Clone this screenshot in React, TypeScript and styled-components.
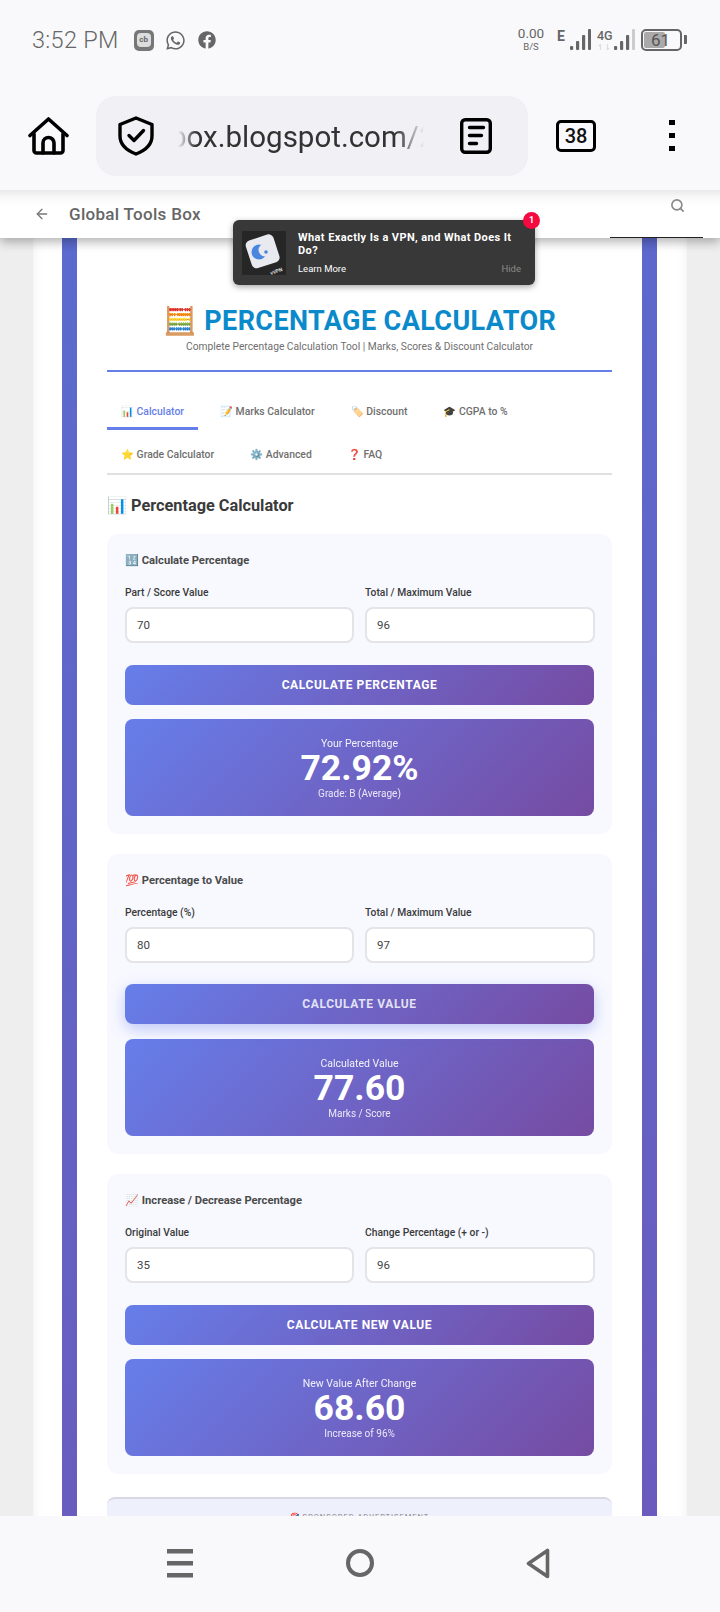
import styled, { createGlobalStyle } from "styled-components";
import { ArrowLeft, Search } from "lucide-react";
import { FaFacebook, FaWhatsapp } from "react-icons/fa";

const GlobalStyle = createGlobalStyle`
  html, body { margin: 0; padding: 0; background: #f9f9fb; }
  body { font-family: Roboto, "Noto Sans", sans-serif; }
  * { box-sizing: border-box; }
`;

const Screen = styled.div`
  width: 720px;
  height: 1612px;
  display: flex;
  flex-direction: column;
  overflow: hidden;
`;

/* phone status bar */
const StatusBar = styled.div`
  height: 96px;
  flex-shrink: 0;
  background: #f9f9fb;
  display: flex;
  justify-content: space-between;
  align-items: flex-start;
  padding: 29px 32px 0 32px;
  color: #666;
`;

const StatusLeft = styled.div`
  display: flex;
  align-items: center;
  height: 22px;
`;

const Clock = styled.span`
  font-size: 23.5px;
  font-weight: 300;
  margin-right: 15px;
  letter-spacing: 0.3px;
`;

const CbIcon = styled.span`
  width: 20px;
  height: 21px;
  border-radius: 5px;
  background: #777;
  display: flex;
  align-items: center;
  justify-content: center;
  margin-right: 11px;
`;

const CbInner = styled.span`
  width: 14px;
  height: 14px;
  border-radius: 4px;
  background: #ddd;
  color: #666;
  font-size: 8px;
  font-weight: 700;
  line-height: 14px;
  text-align: center;
`;

const StatusGlyph = styled.span`
  display: flex;
  margin-right: 12px;
  color: #666;
`;

const StatusRight = styled.div`
  display: flex;
  align-items: flex-start;
  margin-right: 1px;
`;

const Speed = styled.div`
  display: flex;
  flex-direction: column;
  align-items: center;
  width: 28px;
  margin-right: 12px;
  margin-top: -3px;
`;

const SpeedValue = styled.span`
  font-size: 13.5px;
  line-height: 15px;
`;

const SpeedUnit = styled.span`
  font-size: 9.5px;
  line-height: 11px;
`;

const NetLabel = styled.span`
  font-size: 14px;
  font-weight: 700;
  line-height: 14px;
  width: 13px;
`;

const Net4G = styled.div`
  display: flex;
  flex-direction: column;
  align-items: flex-start;
  width: 17px;
  margin-left: 6px;
  font-size: 12.5px;
  font-weight: 500;
  line-height: 14px;
`;

const NetArrows = styled.span`
  font-size: 8px;
  line-height: 8px;
  color: #ccc;
  margin-top: 1px;
`;

const Battery = styled.div`
  position: relative;
  width: 41px;
  height: 22px;
  margin-left: 6px;
  border: 2px solid #666;
  border-radius: 5px;
  padding: 1px;
`;

const BatteryFill = styled.div`
  width: 21px;
  height: 100%;
  background: #aaa;
  border-radius: 2px;
`;

const BatteryText = styled.span`
  position: absolute;
  left: 8px;
  top: 0;
  font-size: 17px;
  line-height: 18px;
  color: #555;
`;

const BatteryTip = styled.div`
  width: 3px;
  height: 9px;
  margin: 6px 0 0 2px;
  background: #666;
  border-radius: 0 1px 1px 0;
`;

/* browser toolbar */
const Toolbar = styled.div`
  height: 94px;
  flex-shrink: 0;
  background: #f9f9fb;
  display: flex;
  align-items: flex-start;
`;

const HomeButton = styled.div`
  width: 96px;
  height: 80px;
  padding-left: 28px;
  display: flex;
  align-items: center;
`;

const Omnibox = styled.div`
  width: 432px;
  height: 80px;
  border-radius: 20px;
  background: #f0f0f5;
  display: flex;
  align-items: center;
  padding-left: 22px;
`;

const UrlClip = styled.div`
  width: 264px;
  margin-left: 16px;
  padding-top: 2px;
  overflow: hidden;
  white-space: nowrap;
  font-size: 29.5px;
  line-height: 40px;
  color: #333;
  -webkit-mask-image: linear-gradient(90deg, transparent 8px, #000 26px, #000 226px, transparent 254px);
  mask-image: linear-gradient(90deg, transparent 8px, #000 26px, #000 226px, transparent 254px);
`;

const DocButton = styled.div`
  margin-left: 26px;
  display: flex;
`;

const TabCount = styled.div`
  width: 40px;
  height: 32px;
  margin: 24px 0 0 28px;
  border: 3px solid #000;
  border-radius: 5px;
  display: flex;
  align-items: center;
  justify-content: center;
  font-size: 20px;
  font-weight: 500;
  color: #111;
`;

const MenuDots = styled.div`
  margin: 24px 0 0 73px;
  display: flex;
  flex-direction: column;
  gap: 8px;
`;

const Dot = styled.span`
  width: 6px;
  height: 5px;
  background: #000;
`;

/* web page area */
const Viewport = styled.div`
  position: relative;
  flex: 1;
  min-height: 0;
  overflow: hidden;
  background: #eeeeee;
  padding: 0 33px;
`;

const SiteBar = styled.div`
  position: absolute;
  top: 0;
  left: 0;
  right: 0;
  height: 48px;
  z-index: 2;
  background: linear-gradient(180deg, #e9e9ea 0, #f9f9f9 8px, #ffffff 16px);
  box-shadow: 0 4px 10px rgba(0, 0, 0, 0.3);
  display: flex;
  align-items: center;
  padding: 0 0 1px 34px;
  color: #777;
`;

const SiteTitle = styled.span`
  margin-left: 19px;
  font-size: 17px;
  font-weight: 500;
  color: #666;
  letter-spacing: 0.3px;
`;

const SiteSearch = styled.span`
  position: absolute;
  right: 35px;
  top: 8px;
  display: flex;
  color: #888;
`;

const SiteBarLine = styled.span`
  position: absolute;
  right: 17px;
  bottom: 0;
  width: 93px;
  height: 1px;
  background: #222;
`;

const AdPopup = styled.div`
  position: absolute;
  z-index: 3;
  left: 233px;
  top: 30px;
  width: 302px;
  height: 65px;
  border-radius: 6px;
  background: #383838;
  box-shadow: 0 2px 6px rgba(0, 0, 0, 0.35);
  display: flex;
  padding: 11px 14px 0 9px;
  color: #fff;
`;

const AdThumb = styled.div`
  position: relative;
  width: 44px;
  height: 44px;
  flex-shrink: 0;
  background: #262626;
  margin-right: 12px;
`;

const AdThumbText = styled.span`
  position: absolute;
  right: 3px;
  bottom: 1px;
  font-size: 5px;
  font-weight: 700;
  color: #ddd;
  transform: rotate(-20deg);
`;

const AdBody = styled.div`
  flex: 1;
  min-width: 0;
`;

const AdTitle = styled.div`
  font-size: 11px;
  font-weight: 700;
  line-height: 13px;
  letter-spacing: 0.4px;
`;

const AdFoot = styled.div`
  display: flex;
  justify-content: space-between;
  font-size: 9.5px;
  line-height: 12px;
  margin-top: 6px;
`;

const AdHide = styled.span`
  color: #8a8a8a;
`;

const AdBadge = styled.span`
  position: absolute;
  right: -5px;
  top: -8px;
  width: 17px;
  height: 17px;
  border-radius: 50%;
  background: #f5093f;
  font-size: 9px;
  font-weight: 700;
  line-height: 17px;
  text-align: center;
`;

const Sheet = styled.div`
  background: #fff;
  padding: 0 30px 0 29px;
  height: 100%;
  box-shadow: inset 10px 0 10px -8px rgba(0, 0, 0, 0.05), inset -10px 0 10px -8px rgba(0, 0, 0, 0.05);
`;

const Frame = styled.div`
  background: linear-gradient(165deg, #5a6bcf 0%, #6a5bbd 100%);
  padding: 0 15px;
  height: 100%;
`;

const Page = styled.div`
  background: #fff;
  height: 100%;
  padding: 115px 30px 0;
`;

const Header = styled.header`
  text-align: center;
  border-bottom: 2px solid #667eea;
  padding-bottom: 17px;
  margin-bottom: 20px;
`;

const Title = styled.h1`
  margin: 0;
  font-size: 27px;
  line-height: 32px;
  font-weight: 700;
  color: #0a8acb;
  letter-spacing: 0.4px;
`;

const Subtitle = styled.p`
  margin: 3px 0 0;
  font-size: 10.25px;
  line-height: 13px;
  color: #6f6f6f;
`;

const Tabs = styled.nav`
  display: flex;
  flex-wrap: wrap;
  gap: 5px 8px;
  border-bottom: 2px solid #e0e0e0;
`;

const Tab = styled.span<{ $active?: boolean }>`
  height: 38px;
  padding: 3px 14px 0;
  display: flex;
  align-items: center;
  font-size: 10.4px;
  font-weight: 500;
  white-space: pre;
  color: ${(p) => (p.$active ? "#667eea" : "#6f6f6f")};
  border-bottom: 3px solid ${(p) => (p.$active ? "#667eea" : "transparent")};
`;

const SectionTitle = styled.h2`
  margin: 21px 0 18px;
  font-size: 16.3px;
  line-height: 20px;
  font-weight: 700;
  color: #3a3a3a;
`;

const Card = styled.section`
  height: 300px;
  margin-bottom: 20px;
  padding: 18px;
  background: #f8f9ff;
  border-radius: 12px;
`;

const CardTitle = styled.h3`
  margin: 1px 0 17px;
  font-size: 11.2px;
  line-height: 16px;
  font-weight: 700;
  color: #4a4a4a;
`;

const Fields = styled.div`
  display: grid;
  grid-template-columns: 229px 230px;
  gap: 11px;
  margin-bottom: 22px;
  margin-top: -1px;
`;

const Field = styled.label`
  display: block;
`;

const FieldLabel = styled.span`
  display: block;
  height: 14px;
  margin-bottom: 8px;
  padding-top: 1px;
  font-size: 10.3px;
  line-height: 14px;
  font-weight: 500;
  color: #3a3a3a;
`;

const ValueInput = styled.input`
  display: block;
  width: 100%;
  height: 36px;
  padding: 0 10px;
  border: 2px solid #e3e3e8;
  border-radius: 8px;
  background: #fff;
  font-family: Roboto, sans-serif;
  font-size: 11.5px;
  color: #444;
  outline: none;
`;

const Gradient = "linear-gradient(135deg, #667eea 0%, #764ba2 100%)";

const CalcButton = styled.button<{ $hover?: boolean }>`
  display: block;
  width: 100%;
  height: 40px;
  margin-bottom: 14px;
  border: none;
  border-radius: 8px;
  background: ${Gradient};
  font-family: Roboto, sans-serif;
  font-size: 12px;
  font-weight: 700;
  letter-spacing: 0.6px;
  color: ${(p) => (p.$hover ? "rgba(255,255,255,0.82)" : "#fff")};
  ${(p) => p.$hover && "transform: translateY(-1px); box-shadow: 0 5px 15px rgba(102, 126, 234, 0.4);"}
`;

const Result = styled.div`
  height: 97px;
  border-radius: 8px;
  background: ${Gradient};
  color: #fff;
  text-align: center;
  padding-top: 18px;
`;

const ResultLabel = styled.div`
  font-size: 10.5px;
  line-height: 14px;
  opacity: 0.9;
`;

const ResultValue = styled.div`
  font-size: 35.5px;
  line-height: 35px;
  font-weight: 700;
`;

const ResultNote = styled.div`
  font-size: 10px;
  line-height: 13px;
  opacity: 0.85;
  margin-top: 1px;
`;

const AdSlot = styled.div`
  margin-top: 23px;
  height: 60px;
  border-top: 2px solid #d8d8e4;
  border-radius: 8px 8px 0 0;
  background: #eef0fc;
  padding-top: 12px;
  text-align: center;
  font-size: 7.5px;
  line-height: 12px;
  letter-spacing: 1px;
  color: #888;
`;

/* phone navigation bar */
const NavBar = styled.div`
  height: 96px;
  flex-shrink: 0;
  background: #f9f9fb;
  display: flex;
  padding: 33px 0 0 90px;
  position: relative;
`;

const NavItem = styled.div`
  width: 180px;
  display: flex;
  justify-content: center;
  color: #666;
`;

const HomeIcon = () => (
  <svg width="41" height="38" viewBox="0 0 41 38" fill="none" stroke="#000" strokeWidth="3.6" strokeLinejoin="round" strokeLinecap="round">
    <path d="M2 18.5 20.5 2 39 18.5" />
    <path d="M6 17v16.5a2.5 2.5 0 0 0 2.5 2.5h24a2.5 2.5 0 0 0 2.5-2.5V17" />
    <path d="M15 36V26a5.5 5.5 0 0 1 11 0v10" />
  </svg>
);

const ShieldIcon = () => (
  <svg width="36" height="40" viewBox="0 0 36 40" fill="none" stroke="#000" strokeWidth="3.4" strokeLinejoin="round" strokeLinecap="round">
    <path d="M18 2 34 8.5V20c0 9-7 14.5-16 18C9 34.500 2 29 2 20V8.500Z" />
    <path d="M11 19.500l5 5 9.500-10" />
  </svg>
);

const DocIcon = () => (
  <svg width="32" height="36" viewBox="0 0 32 36" fill="none" stroke="#000" strokeWidth="3.4" strokeLinecap="round">
    <rect x="1.700" y="1.700" width="28.600" height="32.600" rx="3.500" />
    <path d="M9.500 9.500h14M9.500 17.500h12M9.500 25.500h7" />
  </svg>
);

const SignalBars = ({ dimLast }: { dimLast?: boolean }) => (
  <svg width="21" height="21" viewBox="0 0 21 21" fill="#666">
    <rect x="0" y="17" width="3.200" height="4" rx="1" />
    <rect x="6" y="12" width="3.200" height="9" rx="1" />
    <rect x="12" y="6" width="3.200" height="15" rx="1" />
    <rect x="18" y="0" width="3" height="21" rx="1" fill={dimLast ? "#ccc" : "#666"} />
  </svg>
);

const AppThumb = () => (
  <svg width="44" height="44" viewBox="0 0 44 44">
    <rect x="6" y="6" width="29" height="29" rx="5" fill="#e8eaef" transform="rotate(-18 20 20)" />
    <circle cx="17" cy="21" r="7.500" fill="#4a86e0" />
    <circle cx="23" cy="19" r="6.500" fill="#e8eaef" />
    <circle cx="24" cy="21" r="1.800" fill="#4a86e0" />
  </svg>
);

const MenuLines = () => (
  <svg width="26" height="29" viewBox="0 0 26 29" fill="#666">
    <rect y="0" width="26" height="4.500" />
    <rect y="12" width="26" height="4.500" />
    <rect y="24" width="26" height="4.500" />
  </svg>
);

const HomeCircle = () => (
  <svg width="28" height="28" viewBox="0 0 28 28" fill="none" stroke="#666" strokeWidth="4">
    <circle cx="14" cy="14" r="12" />
  </svg>
);

const BackIcon = styled.svg`
  margin: -1px 0 0 -4px;
`;

const BackTriangle = () => (
  <BackIcon width="24" height="31" viewBox="0 0 24 31" fill="none" stroke="#666" strokeWidth="3.6" strokeLinejoin="round" strokeLinecap="round">
    <path d="M21.500 2.500v26L2.500 15.500Z" />
  </BackIcon>
);

const tabRows = [
  { label: "📊 Calculator", active: true },
  { label: "📝 Marks Calculator" },
  { label: "🏷️ Discount" },
  { label: "🎓 CGPA to %" },
  { label: "⭐ Grade Calculator" },
  { label: "⚙️ Advanced" },
  { label: "❓ FAQ" },
];

const cards = [
  {
    title: "🔢 Calculate Percentage",
    left: "Part / Score Value",
    leftValue: "70",
    right: "Total / Maximum Value",
    rightValue: "96",
    button: "CALCULATE PERCENTAGE",
    resultLabel: "Your Percentage",
    result: "72.92%",
    note: "Grade: B (Average)",
  },
  {
    title: "💯 Percentage to Value",
    left: "Percentage (%)",
    leftValue: "80",
    right: "Total / Maximum Value",
    rightValue: "97",
    button: "CALCULATE VALUE",
    hover: true,
    resultLabel: "Calculated Value",
    result: "77.60",
    note: "Marks / Score",
  },
  {
    title: "📈 Increase / Decrease Percentage",
    left: "Original Value",
    leftValue: "35",
    right: "Change Percentage (+ or -)",
    rightValue: "96",
    button: "CALCULATE NEW VALUE",
    resultLabel: "New Value After Change",
    result: "68.60",
    note: "Increase of 96%",
  },
];

export default function App() {
  return (
    <Screen>
      <GlobalStyle />
      <StatusBar>
        <StatusLeft>
          <Clock>3:52 PM</Clock>
          <CbIcon>
            <CbInner>cb</CbInner>
          </CbIcon>
          <StatusGlyph>
            <FaWhatsapp size={21} />
          </StatusGlyph>
          <StatusGlyph>
            <FaFacebook size={18} />
          </StatusGlyph>
        </StatusLeft>
        <StatusRight>
          <Speed>
            <SpeedValue>0.00</SpeedValue>
            <SpeedUnit>B/S</SpeedUnit>
          </Speed>
          <NetLabel>E</NetLabel>
          <SignalBars />
          <Net4G>
            4G
            <NetArrows>↿⇂</NetArrows>
          </Net4G>
          <SignalBars dimLast />
          <Battery>
            <BatteryFill />
            <BatteryText>61</BatteryText>
          </Battery>
          <BatteryTip />
        </StatusRight>
      </StatusBar>

      <Toolbar>
        <HomeButton>
          <HomeIcon />
        </HomeButton>
        <Omnibox>
          <ShieldIcon />
          <UrlClip>box.blogspot.com/2</UrlClip>
          <DocButton>
            <DocIcon />
          </DocButton>
        </Omnibox>
        <TabCount>38</TabCount>
        <MenuDots>
          <Dot />
          <Dot />
          <Dot />
        </MenuDots>
      </Toolbar>

      <Viewport>
        <SiteBar>
          <ArrowLeft size={16} />
          <SiteTitle>Global Tools Box</SiteTitle>
          <SiteSearch>
            <Search size={15} strokeWidth={2.6} />
          </SiteSearch>
          <SiteBarLine />
        </SiteBar>

        <AdPopup>
          <AdThumb>
            <AppThumb />
            <AdThumbText>vVPN</AdThumbText>
          </AdThumb>
          <AdBody>
            <AdTitle>What Exactly Is a VPN, and What Does It Do?</AdTitle>
            <AdFoot>
              <span>Learn More</span>
              <AdHide>Hide</AdHide>
            </AdFoot>
          </AdBody>
          <AdBadge>1</AdBadge>
        </AdPopup>

        <Sheet>
          <Frame>
            <Page>
              <Header>
                <Title>🧮 PERCENTAGE CALCULATOR</Title>
                <Subtitle>Complete Percentage Calculation Tool | Marks, Scores &amp; Discount Calculator</Subtitle>
              </Header>
              <Tabs>
                {tabRows.map((t) => (
                  <Tab key={t.label} $active={t.active}>
                    {t.label}
                  </Tab>
                ))}
              </Tabs>
              <SectionTitle>📊 Percentage Calculator</SectionTitle>
              {cards.map((c) => (
                <Card key={c.title}>
                  <CardTitle>{c.title}</CardTitle>
                  <Fields>
                    <Field>
                      <FieldLabel>{c.left}</FieldLabel>
                      <ValueInput readOnly value={c.leftValue} />
                    </Field>
                    <Field>
                      <FieldLabel>{c.right}</FieldLabel>
                      <ValueInput readOnly value={c.rightValue} />
                    </Field>
                  </Fields>
                  <CalcButton $hover={c.hover}>{c.button}</CalcButton>
                  <Result>
                    <ResultLabel>{c.resultLabel}</ResultLabel>
                    <ResultValue>{c.result}</ResultValue>
                    <ResultNote>{c.note}</ResultNote>
                  </Result>
                </Card>
              ))}
              <AdSlot>🎯 SPONSORED ADVERTISEMENT</AdSlot>
            </Page>
          </Frame>
        </Sheet>
      </Viewport>

      <NavBar>
        <NavItem>
          <MenuLines />
        </NavItem>
        <NavItem>
          <HomeCircle />
        </NavItem>
        <NavItem>
          <BackTriangle />
        </NavItem>
      </NavBar>
    </Screen>
  );
}
